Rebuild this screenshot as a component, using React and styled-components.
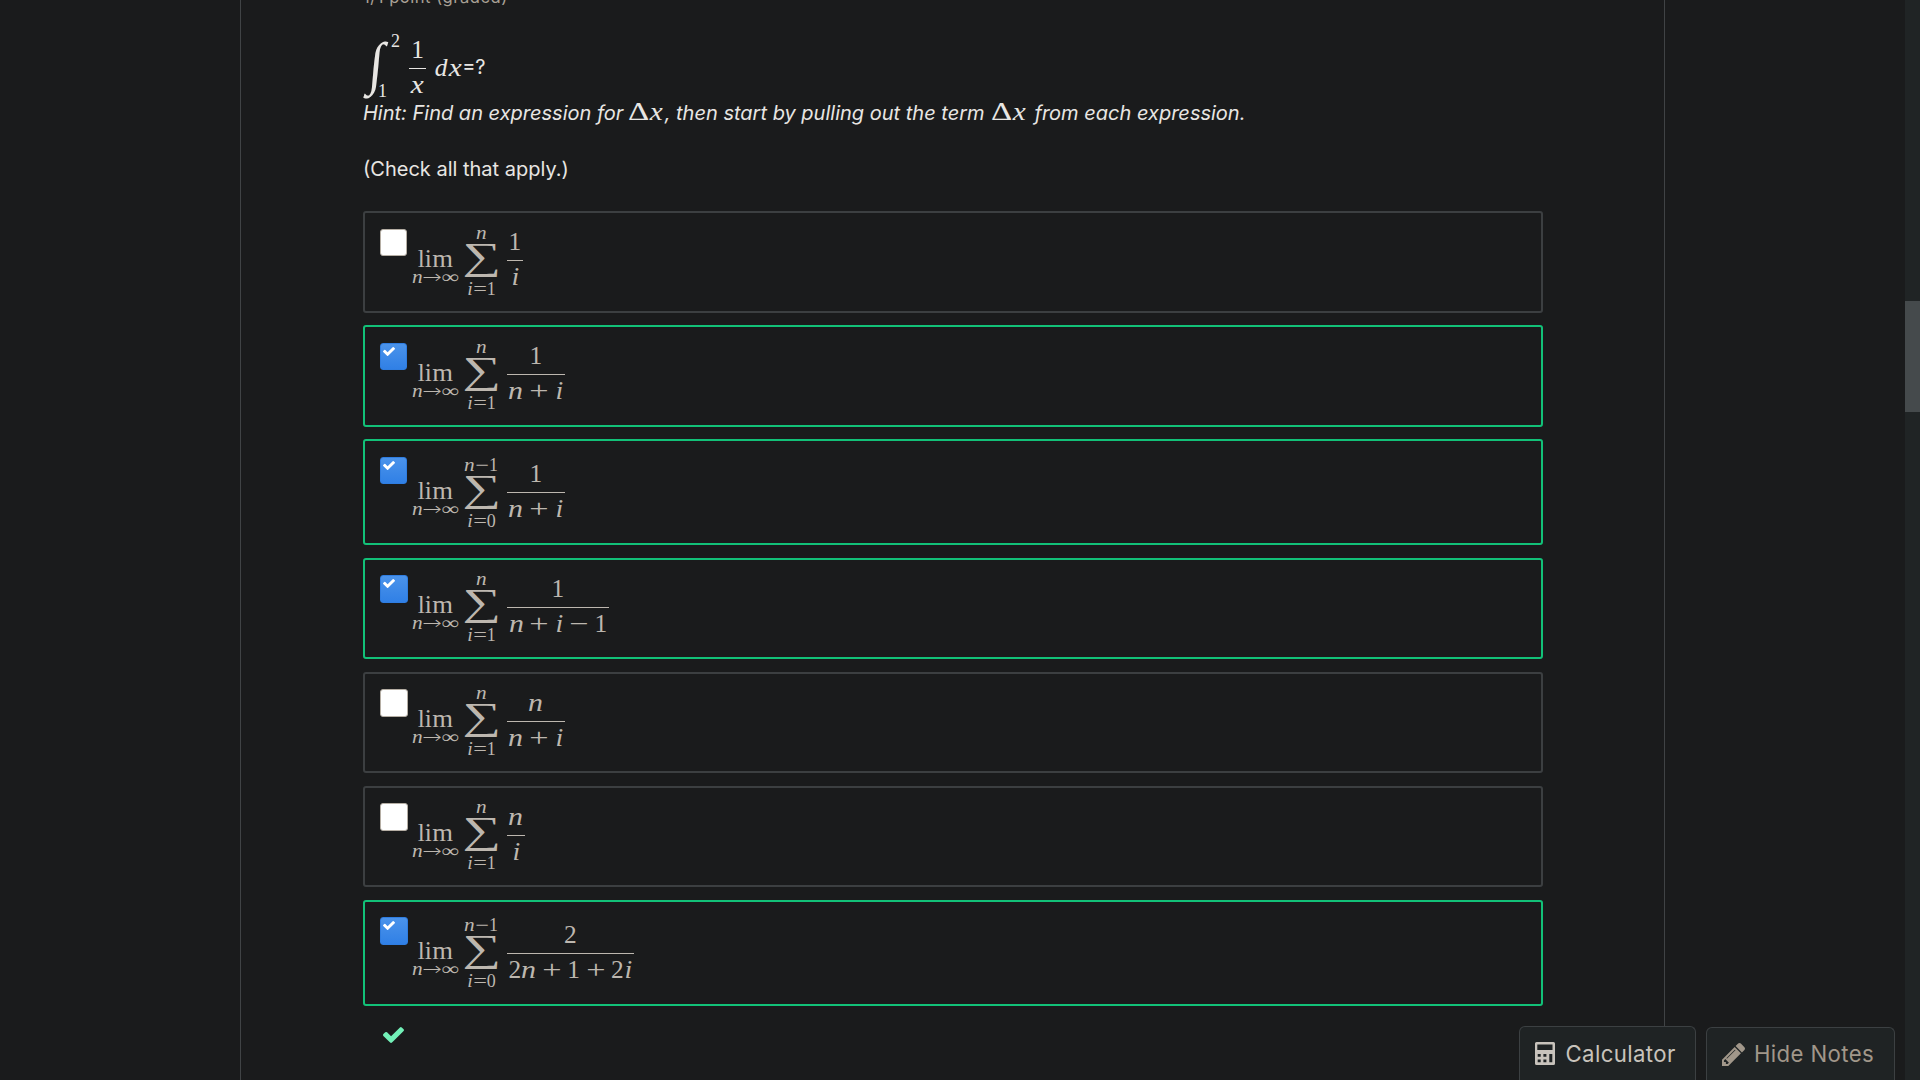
import React from "react";
import styled, { createGlobalStyle, css } from "styled-components";

const Global = createGlobalStyle`
  html, body { margin: 0; padding: 0; background: #1a1b1c; overflow: hidden; }
  #root { height: 1080px; }
  * { box-sizing: border-box; }
`;

const EM = 25.4;
const SCRIPT = 18;

const Page = styled.div`
  display: flex;
  width: 1920px;
  height: 1080px;
  overflow: hidden;
  position: relative;
  background: #1a1b1c;
  color: #e8e6e3;
  font-family: Inter, "Liberation Sans", sans-serif;
`;

const Content = styled.main`
  width: 1425px;
  height: 1080px;
  margin-left: 240px;
  border-left: 1px solid #404345;
  border-right: 1px solid #404345;
  padding: 0 121px 0 122px;
  overflow: hidden;
`;

const Progress = styled.div`
  height: 7px;
  display: flex;
  align-items: flex-end;
  color: #a8a095;
  font-size: 16.6px;
  line-height: 20px;
  letter-spacing: 0.5px;
  white-space: pre;
`;

const Formula = styled.div`
  display: flex;
  align-items: flex-start;
  font-family: "Liberation Serif", serif;
  font-size: ${EM}px;
  line-height: 24px;
  white-space: pre;
`;

const Integral = styled(Formula)`
  height: 91px;
`;

const Glyph = styled.span`
  display: inline-block;
  width: ${(p) => p.$w}em;
  text-align: center;
  font-style: ${(p) => (p.$i ? "italic" : "normal")};
  transform: scaleX(${(p) => p.$s || 1});
`;

const Arrow = styled.span`
  display: inline-flex;
  justify-content: center;
  width: 1em;
  font-family: "DejaVu Sans", sans-serif;
  font-weight: 200;
  transform: scaleX(1.3);
`;

const Column = styled.div`
  display: flex;
  flex-direction: column;
  align-items: center;
  width: ${(p) => p.$w}px;
  margin-left: ${(p) => p.$ml || 0}px;
  padding-top: ${(p) => p.$pt || 0}px;
`;

const Bounds = styled.div`
  display: flex;
  flex-direction: column;
  justify-content: space-between;
  width: 31px;
  height: 92px;
  margin-left: -12px;
  padding-top: 26px;
`;

const Line = styled.div`
  display: flex;
  justify-content: center;
  height: 24px;
  line-height: 24px;
  margin-top: ${(p) => p.$mt || 0}px;
`;

const Script = styled.div`
  display: flex;
  justify-content: center;
  font-size: ${SCRIPT}px;
  height: 16px;
  line-height: 16px;
  margin-top: ${(p) => p.$mt || 0}px;
`;

const Bound = styled(Script)`
  justify-content: flex-start;
  padding-left: ${(p) => p.$pl || 0}px;
`;

const BigOp = styled.div`
  display: flex;
  align-items: center;
  justify-content: center;
  width: 37px;
  height: ${(p) => p.$h}px;
  font-size: ${(p) => p.$fs}px;
  line-height: ${(p) => p.$h}px;
  transform: ${(p) => p.$t || "none"};
`;

const Bar = styled.div`
  width: 100%;
  height: 1px;
  background: currentColor;
  margin-top: ${(p) => p.$mt || 0}px;
`;

const Text = styled.div`
  font-size: 20px;
  line-height: 30px;
  height: 30px;
  font-style: ${(p) => (p.$i ? "italic" : "normal")};
  margin-top: ${(p) => p.$mt || 0}px;
  white-space: pre;
`;

const Equals = styled.span`
  font-family: Inter, sans-serif;
  font-size: 20px;
`;

const InlineMath = styled.span`
  font-family: "Liberation Serif", serif;
  font-size: ${EM}px;
  font-style: normal;
  line-height: 0;
  margin-left: ${(p) => p.$ml || 0}px;
  margin-right: ${(p) => p.$mr || 0}px;
`;

const Choices = styled.div`
  display: flex;
  flex-direction: column;
  color: #bdb7af;
  margin-top: 27px;
`;

const Choice = styled.div`
  display: flex;
  height: ${(p) => p.$h}px;
  margin-bottom: ${(p) => p.$gap}px;
  border: 2px solid ${(p) => (p.$on ? "#12c178" : "#3c3f41")};
  border-radius: 3px;
  padding-left: 15px;
`;

const CheckCell = styled.div`
  width: 32px;
  padding-top: ${(p) => p.$pt}px;
`;

const Box = styled.div`
  width: ${(p) => p.$size}px;
  height: ${(p) => p.$size}px;
  border-radius: 3px;
  border: 1px solid #b5aea4;
  background: #fff;
  ${(p) =>
    p.$on &&
    css`
      border-color: #2f7de0;
      background: linear-gradient(#4b93ea, #3080e6);
    `}
  display: flex;
  padding: 3px 0 0 2px;
`;

const Correct = styled.div`
  display: flex;
  padding: 21px 0 0 20px;
`;

const ScrollTrack = styled.div`
  width: 15px;
  height: 1080px;
  margin-left: auto;
  padding-top: 301px;
  background: #202425;
`;

const ScrollThumb = styled.div`
  height: 111px;
  background: #454a4c;
`;

const Dock = styled.div`
  position: absolute;
  right: 25px;
  bottom: 0;
  display: flex;
  align-items: flex-end;
  gap: 10px;
`;

const DockButton = styled.button`
  display: flex;
  align-items: flex-start;
  width: ${(p) => p.$w}px;
  height: ${(p) => p.$h}px;
  padding: ${(p) => p.$pt}px 0 0 15px;
  gap: ${(p) => p.$gap}px;
  border: 1px solid #3c4042;
  border-bottom: 0;
  border-radius: 6px 6px 0 0;
  background: #1f2324;
  color: ${(p) => p.$c};
  font-family: Inter, sans-serif;
  font-size: 22.2px;
  line-height: 27px;
  letter-spacing: 0.38px;
  white-space: nowrap;

  svg {
    flex: none;
    margin-top: ${(p) => 15 - p.$pt}px;
  }
`;

const Check = ({ w, h, color }) => (
  <svg width={w} height={h} viewBox="121 334 1550 1188" fill={color} preserveAspectRatio="none">
    <path d="M1671 566q0 40-28 68l-724 724-136 136q-28 28-68 28t-68-28l-136-136-362-362q-28-28-28-68t28-68l136-136q28-28 68-28t68 28l294 295 656-657q28-28 68-28t68 28l136 136q28 28 28 68z" />
  </svg>
);

const METRICS = {
  n: { $w: 0.6, $i: true, $s: 1.18 },
  i: { $w: 0.345, $i: true, $s: 1.1 },
  x: { $w: 0.572, $i: true, $s: 1.15 },
  d: { $w: 0.52, $i: true, $s: 1 },
  "∞": { $w: 1, $s: 1.35 },
  "+": { $w: 0.778, $s: 1.35 },
  "−": { $w: 0.778, $s: 1.35 },
  "=": { $w: 0.778, $s: 1.35 },
  "Δ": { $w: 0.833, $s: 1.3 },
  " ": { $w: 0.222 },
};

const Maths = ({ children }) =>
  [...children].map((c, k) =>
    c === "→" ? (
      <Arrow key={k}>{c}</Arrow>
    ) : (
      <Glyph key={k} {...(METRICS[c] || { $w: 0.5 })}>
        {c}
      </Glyph>
    )
  );

const LimitSum = ({ from, to, num, den, w, tall, up }) => (
  <Formula>
    <Column $w={46.7} $pt={33 + tall - up}>
      <Line>
        <Glyph $w={0.278}>l</Glyph>
        <Glyph $w={0.278}>i</Glyph>
        <Glyph $w={0.833} $s={1.05}>m</Glyph>
      </Line>
      <Script $mt={-1}>
        <Maths>n→∞</Maths>
      </Script>
    </Column>
    <Column $w={36.7} $ml={4.2} $pt={12 + tall - up}>
      <Script>
        <Maths>{to}</Maths>
      </Script>
      <BigOp $h={41} $fs={38} $t="translate(0.5px, -5px) scale(1.42, 1)">∑</BigOp>
      <Script $mt={-1}>
        <Maths>{from}</Maths>
      </Script>
    </Column>
    <Column $w={w} $ml={7.4} $pt={16 + tall}>
      <Line>
        <Maths>{num}</Maths>
      </Line>
      <Bar $mt={7} />
      <Line $mt={3}>
        <Maths>{den}</Maths>
      </Line>
    </Column>
  </Formula>
);

const CHOICES = [
  { on: false, h: 102, gap: 12, size: 27, from: "i=1", to: "n", num: "1", den: "i", w: 16 },
  { on: true, h: 102, gap: 12, size: 27, from: "i=1", to: "n", num: "1", den: "n + i", w: 58 },
  { on: true, h: 106, gap: 13, size: 27, from: "i=0", to: "n−1", num: "1", den: "n + i", w: 58, tall: 4 },
  { on: true, h: 101, gap: 13, size: 28, from: "i=1", to: "n", num: "1", den: "n + i − 1", w: 102, up: 1 },
  { on: false, h: 101, gap: 13, size: 28, from: "i=1", to: "n", num: "n", den: "n + i", w: 58, up: 1 },
  { on: false, h: 101, gap: 13, size: 28, from: "i=1", to: "n", num: "n", den: "i", w: 18, up: 1 },
  { on: true, h: 106, gap: 0, size: 28, from: "i=0", to: "n−1", num: "2", den: "2n + 1 + 2i", w: 127, tall: 4, up: 1 },
];

const CalculatorIcon = () => (
  <svg width="20" height="23" viewBox="0 0 20 23" fill="currentColor" fillRule="evenodd">
    <path d="M1.500 0h17a1.500 1.500 0 0 1 1.500 1.500v20a1.500 1.500 0 0 1-1.500 1.500h-17a1.500 1.500 0 0 1-1.500-1.500v-20a1.500 1.500 0 0 1 1.500-1.500zM2.300 2.500v5.500h15.200v-5.500zM2.700 12v2.800h3v-2.800zM8.400 12v2.800h3v-2.800zM14.300 12v8.300h3v-8.300zM2.700 17.500v2.800h3v-2.800zM8.400 17.500v2.800h3v-2.800z" />
  </svg>
);

const PencilIcon = () => (
  <svg width="23" height="23" viewBox="128 149 1515 1515" fill="currentColor">
    <path d="M491 1536l91-91-235-235-91 91v107h128v128h107zm523-928q0-22-22-22-10 0-17 7l-542 542q-7 7-7 17 0 22 22 22 10 0 17-7l542-542q7-7 7-17zm-54-192l416 416-832 832H128v-416zm683 96q0 53-37 90l-166 166-416-416 166-165q36-38 90-38 53 0 91 38l235 234q37 39 37 91z" />
  </svg>
);

export default function App() {
  return (
    <>
      <Global />
      <Page>
        <Content>
          <Progress>1/1 point (graded)</Progress>
          <Integral>
            <Column $w={27} $pt={27}>
              <BigOp $h={64} $fs={52} $t="translateY(-2px) scaleY(1.12) skewX(-6deg)">∫</BigOp>
            </Column>
            <Bounds>
              <Bound $pl={13}>2</Bound>
              <Bound>1</Bound>
            </Bounds>
            <Column $w={17} $pt={30}>
              <Line>
                <Maths>1</Maths>
              </Line>
              <Bar $mt={7} />
              <Line $mt={3}>
                <Maths>x</Maths>
              </Line>
            </Column>
            <Column $w={54} $ml={7} $pt={48}>
              <Line>
                <Maths>dx</Maths>
                <Equals>=?</Equals>
              </Line>
            </Column>
          </Integral>
          <Text $i>
            Hint: Find an expression for <InlineMath $ml={-1} $mr={1}><Maths>Δx</Maths></InlineMath>, then start by pulling out the term <InlineMath $ml={1} $mr={2}><Maths>Δx</Maths></InlineMath> from each expression.
          </Text>
          <Text $mt={26}>(Check all that apply.)</Text>
          <Choices>
            {CHOICES.map((c, k) => (
              <Choice key={k} $on={c.on} $h={c.h} $gap={c.gap}>
                <CheckCell $pt={c.size === 27 ? 16 : 15}>
                  <Box $on={c.on} $size={c.size}>
                    {c.on && <Check w={12} h={9} color="#fff" />}
                  </Box>
                </CheckCell>
                <LimitSum {...c} tall={c.tall || 0} up={c.up || 0} />
              </Choice>
            ))}
          </Choices>
          <Correct>
            <Check w={21} h={16} color="#73f0b8" />
          </Correct>
        </Content>
        <ScrollTrack>
          <ScrollThumb />
        </ScrollTrack>
        <Dock>
          <DockButton $w={177} $h={54} $gap={10.5} $pt={13} $c="#c8c3bc">
            <CalculatorIcon />
            Calculator
          </DockButton>
          <DockButton $w={189} $h={53} $gap={9} $pt={12} $c="#a1978a">
            <PencilIcon />
            Hide Notes
          </DockButton>
        </Dock>
      </Page>
    </>
  );
}
